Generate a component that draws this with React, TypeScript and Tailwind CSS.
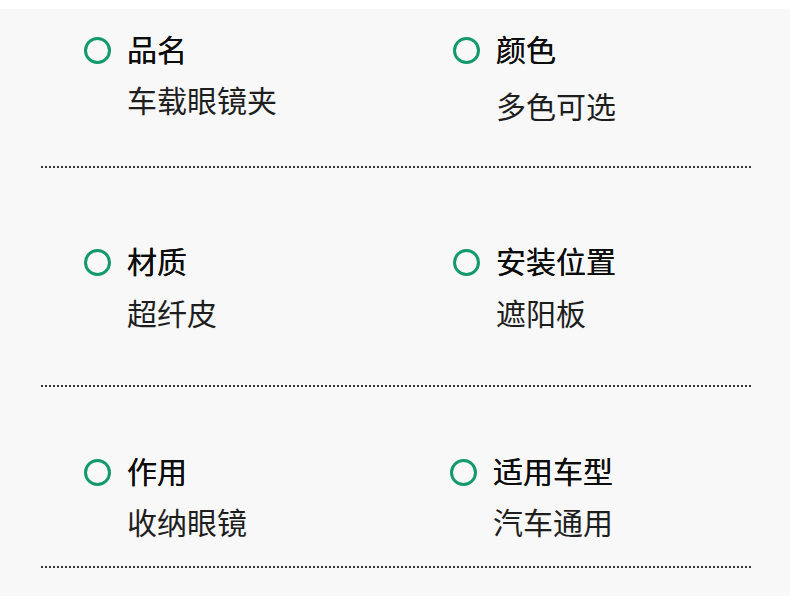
import React from "react";

type Item = { title: string; value: string; valueGap?: number };

function Cell({ item, dx = 0 }: { item: Item; dx?: number }) {
  return (
    <div className="flex flex-col" style={{ marginLeft: dx }}>
      <div className="flex items-center h-[30px]">
        <span className="box-border w-[27px] h-[27px] rounded-full border-[3px] border-[#139a6a] shrink-0 mt-[4px]" />
        <span className="ml-[16px] text-[30px] leading-[30px] font-normal text-[#0d0d0d] whitespace-nowrap [text-shadow:0_0_0.4px_#0d0d0d]">
          {item.title}
        </span>
      </div>
      <div
        className="pl-[43px] text-[30px] leading-[30px] text-[#1e1e1e] whitespace-nowrap"
        style={{ marginTop: item.valueGap ?? 21 }}
      >
        {item.value}
      </div>
    </div>
  );
}

function Dots() {
  return (
    <div className="ml-[41px] mr-[39px] h-[2px] bg-[repeating-linear-gradient(90deg,#333333_0_2px,transparent_2px_4px)]" />
  );
}

export default function App() {
  return (
    <div
      className="w-[790px] h-[606px] bg-white pt-[9px]"
      style={{ fontFamily: '"Noto Sans CJK SC", "Noto Sans", sans-serif' }}
    >
      <div className="h-[587px] bg-[#f8f8f8] flex flex-col">
        <div className="grid grid-cols-[369px_1fr] pl-[84px] pt-[24px] pb-[46px]">
          <Cell item={{ title: "品名", value: "车载眼镜夹" }} />
          <Cell item={{ title: "颜色", value: "多色可选", valueGap: 27 }} />
        </div>
        <Dots />
        <div className="grid grid-cols-[369px_1fr] pl-[84px] pt-[77px] pb-[58px]">
          <Cell item={{ title: "材质", value: "超纤皮", valueGap: 22 }} />
          <Cell item={{ title: "安装位置", value: "遮阳板", valueGap: 22 }} />
        </div>
        <Dots />
        <div className="grid grid-cols-[369px_1fr] pl-[84px] pt-[68px] pb-[30px]">
          <Cell item={{ title: "作用", value: "收纳眼镜" }} />
          <Cell item={{ title: "适用车型", value: "汽车通用" }} dx={-3} />
        </div>
        <Dots />
      </div>
    </div>
  );
}
